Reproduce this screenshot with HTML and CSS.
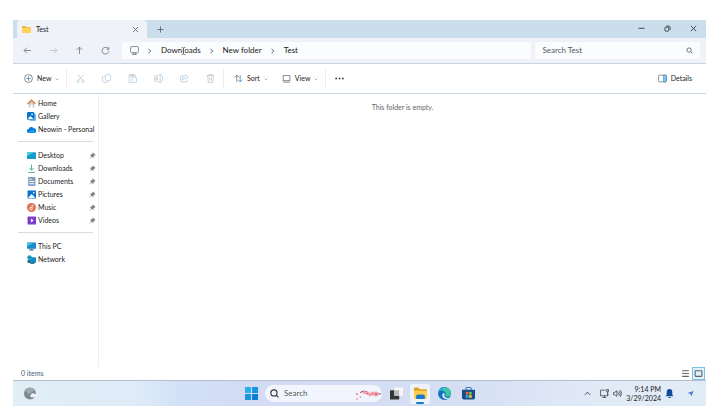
FILE: index.html
```
<!DOCTYPE html>
<html lang="en">
<head>
  <meta charset="UTF-8" />
  <meta name="viewport" content="width=device-width, initial-scale=1.0" />
  <title>Test - File Explorer</title>
  <link rel="stylesheet" href="styles.css">
</head>
<body>

  <main class="explorer">
    <header class="title-bar">
      <div class="tab">
        <svg class="icon" viewBox="0 0 16 16"><path d="M0 3q0-1 1-1h5l2 2h7q1 0 1 1v8H0z" fill="#e8a823" stroke="none"/><path d="M0 5h16v8q0 1-1 1H1q-1 0-1-1z" fill="#ffd35c" stroke="none"/></svg>
        <span class="tab-name">Test</span>
        <button class="tab-close" aria-label="Close tab"><svg class="icon-small" viewBox="0 0 16 16"><path d="M2 2l12 12M14 2L2 14"/></svg></button>
      </div>
      <button class="tab-add" aria-label="New tab"><svg class="icon-small" viewBox="0 0 16 16"><path d="M8 1v14M1 8h14"/></svg></button>
      <div class="window-buttons">
        <button aria-label="Minimize"><svg class="icon-small dark" viewBox="0 0 16 16"><path d="M1 7.500h14"/></svg></button>
        <button aria-label="Restore"><svg class="icon-small dark" viewBox="0 0 16 16"><rect x="2" y="5" width="9" height="9" rx="2"/><path d="M5 2.500h6q3 0 3 3V11"/></svg></button>
        <button aria-label="Close"><svg class="icon-small dark" viewBox="0 0 16 16"><path d="M2 2l12 12M14 2L2 14"/></svg></button>
      </div>
    </header>

    <div class="address-row">
      <nav class="history">
        <button aria-label="Back"><svg class="icon" viewBox="0 0 16 16"><path d="M14 8H2M7 3L2 8l5 5"/></svg></button>
        <button aria-label="Forward" class="faded"><svg class="icon" viewBox="0 0 16 16"><path d="M2 8h12M9 3l5 5-5 5"/></svg></button>
        <button aria-label="Up"><svg class="icon" viewBox="0 0 16 16"><path d="M8 14V2M3 7l5-5 5 5"/></svg></button>
        <button aria-label="Refresh"><svg class="icon" viewBox="0 0 16 16"><path d="M13 5a6 6 0 1 0 1 4M14 2v4h-4"/></svg></button>
      </nav>
      <nav class="crumbs" aria-label="Path">
        <svg class="icon" viewBox="0 0 16 16"><rect x="1" y="1" width="14" height="11" rx="2"/><path d="M6 12v2.500M10 12v2.500M4 15h8"/></svg>
        <svg class="chevron" viewBox="0 0 8 8"><path d="M2 1l3 3-3 3"/></svg>
        <a href="#" class="crumb">Downloads
          <svg class="text-cursor" viewBox="0 0 8 16"><path class="halo" d="M1 2q3 0 3 2v8q0 2-3 2M7 2q-3 0-3 2v8q0 2 3 2"/><path d="M1 2q3 0 3 2v8q0 2-3 2M7 2q-3 0-3 2v8q0 2 3 2"/></svg>
        </a>
        <svg class="chevron" viewBox="0 0 8 8"><path d="M2 1l3 3-3 3"/></svg>
        <a href="#" class="crumb">New folder</a>
        <svg class="chevron" viewBox="0 0 8 8"><path d="M2 1l3 3-3 3"/></svg>
        <a href="#" class="crumb">Test</a>
      </nav>
      <label class="folder-search">
        <input type="text" placeholder="Search Test" aria-label="Search Test">
        <svg class="icon-small" viewBox="0 0 16 16"><circle cx="7" cy="7" r="5"/><path d="M11 11l4 4"/></svg>
      </label>
    </div>

    <div class="toolbar">
      <button class="tool-text tool-new">
        <svg class="icon" viewBox="0 0 16 16"><circle cx="8" cy="8" r="7"/><path class="blue" d="M8 4v8M4 8h8"/></svg>
        New
        <svg class="caret" viewBox="0 0 8 8"><path d="M1 3l3 3 3-3"/></svg>
      </button>
      <div class="tool-group">
        <button aria-label="Cut"><svg class="icon" viewBox="0 0 16 16"><path d="M3 1l8 10M13 1L5 11"/><circle class="blue" cx="3.500" cy="13" r="2.200"/><circle class="blue" cx="12.500" cy="13" r="2.200"/></svg></button>
        <button aria-label="Copy"><svg class="icon" viewBox="0 0 16 16"><path d="M5 4H3q-2 0-2 2v7q0 2 2 2h5q2 0 2-2"/><rect class="blue" x="6" y="1" width="9" height="11" rx="2"/></svg></button>
        <button aria-label="Paste"><svg class="icon" viewBox="0 0 16 16"><path d="M6 15H2V2h11v3M5 1h5v3H5z"/><rect class="blue" x="7" y="6" width="8" height="9" rx="1"/></svg></button>
        <button aria-label="Rename"><svg class="icon" viewBox="0 0 16 16"><path d="M8 3H3Q1 3 1 5v6q0 2 2 2h5M3 11l2-6 2 6M4 9h2"/><path class="blue" d="M9 1h4M9 15h4M11 1v14M13 3q2 0 2 2v6q0 2-2 2"/></svg></button>
        <button aria-label="Share"><svg class="icon" viewBox="0 0 16 16"><path d="M6 3H3Q1 3 1 5v7q0 2 2 2h8q2 0 2-2v-1"/><path class="blue" d="M10 1l5 4-5 4V7q-4 0-6 4 0-7 6-8z"/></svg></button>
        <button aria-label="Delete"><svg class="icon" viewBox="0 0 16 16"><path d="M1 3h14M5 3V1h6v2M3 3l1 12h8l1-12M6.500 6v6M9.500 6v6"/></svg></button>
      </div>
      <div class="tool-group view-tools">
        <button class="tool-text">
          <svg class="icon" viewBox="0 0 16 16"><path d="M5 14V2M1 6l4-4 4 4"/><path class="blue" d="M11 2v12M7.500 10.500L11 14l4-4"/></svg>
          Sort
          <svg class="caret" viewBox="0 0 8 8"><path d="M1 3l3 3 3-3"/></svg>
        </button>
        <button class="tool-text">
          <svg class="icon" viewBox="0 0 16 16"><rect x="2" y="3" width="12" height="9"/><path d="M2 14.500h12"/></svg>
          View
          <svg class="caret" viewBox="0 0 8 8"><path d="M1 3l3 3 3-3"/></svg>
        </button>
      </div>
      <button class="more" aria-label="See more"><svg class="icon solid" viewBox="0 0 16 16"><circle cx="2" cy="8" r="1.700"/><circle cx="8" cy="8" r="1.700"/><circle cx="14" cy="8" r="1.700"/></svg></button>
      <button class="tool-text details">
        <svg class="icon" viewBox="0 0 16 16"><rect x="1" y="2" width="14" height="12" rx="2"/><path d="M10 2h3q2 0 2 2v8q0 2-2 2h-3z" fill="#8cc8f4" stroke="#318fd4"/></svg>
        Details
      </button>
    </div>

    <div class="panes">
      <nav class="sidebar">
        <ul>
          <li><a href="#"><svg class="icon" viewBox="0 0 16 16"><path d="M3 7v8h3v-5h4v5h3V7L8 3z" fill="#c9ced3" stroke="none"/><path d="M1 9l7-7 7 7" stroke="#dc783e" stroke-width="2.500"/></svg>Home</a></li>
          <li><a href="#"><svg class="icon" viewBox="0 0 16 16"><rect x="4" y="3" width="12" height="13" rx="2" fill="#7db9e8" stroke="none"/><rect width="13" height="14" rx="2" fill="#0873ce" stroke="none"/><path d="M1 13l5-6 6 6z" fill="#fff" stroke="none"/><circle cx="9" cy="4" r="1.500" fill="#fff" stroke="none"/></svg>Gallery</a></li>
          <li><a href="#"><svg class="icon" viewBox="0 0 16 16"><path d="M3 14a3.500 3.500 0 0 1 0-7 5 5 0 0 1 9-1 4 4 0 0 1 1 8z" fill="#087bdc" stroke="none"/><path d="M2 13l8-5 5 4q0 2-3 2H4z" fill="#1c9af0" stroke="none"/></svg>Neowin - Personal</a></li>
        </ul>
        <hr>
        <ul>
          <li><a href="#"><svg class="icon" viewBox="0 0 16 16"><rect y="2" width="16" height="12" rx="1" fill="#159ccc" stroke="none"/><path d="M0 9V3q0-1 1-1h11z" fill="#4ed2df" stroke="none"/></svg>Desktop</a><svg class="pin" viewBox="0 0 16 16"><path d="M9 1l6 6-2 1-3 3v3L6 11l-4 4-1-1 4-4-3-4h3l3-3z"/></svg></li>
          <li><a href="#"><svg class="icon" viewBox="0 0 16 16"><path d="M8 1v10M4 7l4 4 4-4M2 15h12" stroke="#2dac83" stroke-width="1.500"/></svg>Downloads</a><svg class="pin" viewBox="0 0 16 16"><path d="M9 1l6 6-2 1-3 3v3L6 11l-4 4-1-1 4-4-3-4h3l3-3z"/></svg></li>
          <li><a href="#"><svg class="icon" viewBox="0 0 16 16"><rect x="2" width="13" height="16" rx="1" fill="#7e9dc0" stroke="none"/><path d="M4 4h4M4 8h9M4 12h9" stroke="#fff" stroke-width="2"/></svg>Documents</a><svg class="pin" viewBox="0 0 16 16"><path d="M9 1l6 6-2 1-3 3v3L6 11l-4 4-1-1 4-4-3-4h3l3-3z"/></svg></li>
          <li><a href="#"><svg class="icon" viewBox="0 0 16 16"><rect x="1" y="1" width="15" height="14" rx="1" fill="#0873ce" stroke="none"/><path d="M2 14l6-7 7 7z" fill="#fff" stroke="none"/><circle cx="12" cy="5" r="1.500" fill="#fff" stroke="none"/></svg>Pictures</a><svg class="pin" viewBox="0 0 16 16"><path d="M9 1l6 6-2 1-3 3v3L6 11l-4 4-1-1 4-4-3-4h3l3-3z"/></svg></li>
          <li><a href="#"><svg class="icon" viewBox="0 0 16 16"><circle cx="8" cy="8" r="8" fill="#df7359" stroke="none"/><circle cx="7" cy="10" r="2.200" stroke="#fff"/><path d="M9 10V4l3 1" stroke="#fff"/></svg>Music</a><svg class="pin" viewBox="0 0 16 16"><path d="M9 1l6 6-2 1-3 3v3L6 11l-4 4-1-1 4-4-3-4h3l3-3z"/></svg></li>
          <li><a href="#"><svg class="icon" viewBox="0 0 16 16"><rect x="1" y="1" width="15" height="14" rx="1" fill="#8242cc" stroke="none"/><path d="M3 2v12M14 2v12" stroke="#5b26a0" stroke-width="2" stroke-dasharray="2 2"/><path d="M7 5l5 3-5 3z" fill="#fff" stroke="none"/></svg>Videos</a><svg class="pin" viewBox="0 0 16 16"><path d="M9 1l6 6-2 1-3 3v3L6 11l-4 4-1-1 4-4-3-4h3l3-3z"/></svg></li>
        </ul>
        <hr>
        <ul>
          <li><a href="#"><svg class="icon" viewBox="0 0 16 16"><rect y="1" width="16" height="11" rx="1" fill="#168dc9" stroke="none"/><path d="M0 8V2q0-1 1-1h11z" fill="#46c4df" stroke="none"/><path d="M4 14h8M8 12v2" stroke="#557083" stroke-width="2"/></svg>This PC</a></li>
          <li><a href="#"><svg class="icon" viewBox="0 0 16 16"><rect x="3" y="4" width="13" height="10" rx="1" fill="#158bc6" stroke="none"/><path d="M6 15h7" stroke="#466b82" stroke-width="2"/><circle cx="4.500" cy="4.500" r="4" fill="#22a5c8" stroke="none"/><path d="M1 4h7" stroke="#1b6389"/><rect x="1" y="9" width="4" height="5" fill="#1b6389" stroke="none"/></svg>Network</a></li>
        </ul>
      </nav>
      <section class="files">
        <p>This folder is empty.</p>
      </section>
    </div>

    <footer class="status-bar">
      <span>0 items</span>
      <div class="view-switch">
        <button aria-label="Details view"><svg class="icon" viewBox="0 0 16 16"><path d="M2 3h12M2 8h12M2 13h12" stroke-width="2"/></svg></button>
        <button aria-label="Large icons" class="selected"><svg class="icon" viewBox="0 0 16 16"><rect x="2" y="3" width="12" height="10" rx="1" stroke-width="2"/></svg></button>
      </div>
    </footer>
  </main>

  <footer class="taskbar">
    <button class="widgets" aria-label="Weather"><svg class="app-icon" viewBox="0 0 24 24"><circle cx="11" cy="12" r="11" fill="#7e8a92"/><path d="M2 6a11 11 0 0 1 18 0L8 14z" fill="#9ea8ad"/><path d="M13 19a3 3 0 0 1 0-5 4 4 0 0 1 7-1 3 3 0 0 1 1 6z" fill="#eef1f4"/></svg></button>

    <div class="apps">
      <button aria-label="Start"><svg class="app-icon" viewBox="0 0 24 24"><path d="M0 0h11v11H0z" fill="#28aee9"/><path d="M13 0h11v11H13zM0 13h11v11H0z" fill="#1895df"/><path d="M13 13h11v11H13z" fill="#0b7dd2"/></svg></button>
      <label class="search-box">
        <svg class="icon" viewBox="0 0 16 16"><circle cx="7" cy="7" r="5.500" stroke-width="2"/><path d="M11 11l4 4" stroke-width="2"/></svg>
        <input type="text" placeholder="Search" aria-label="Search">
        <svg class="blossom" viewBox="0 0 54 24"><path d="M10 9l8-3 8 2M34 9l8 2 10 1" fill="none" stroke="#795359" stroke-width="2"/><g fill="#f4a3b0"><circle cx="4" cy="12" r="2.500"/><circle cx="18" cy="9" r="3"/><circle cx="24" cy="10" r="4"/><circle cx="30" cy="13" r="4"/><circle cx="36" cy="11" r="4"/><circle cx="42" cy="12" r="5"/><circle cx="11" cy="18" r="2"/><circle cx="4" cy="22" r="2"/></g><g fill="#dc5470"><circle cx="25" cy="11" r="1.500"/><circle cx="35" cy="12" r="1.500"/><circle cx="42" cy="12" r="2"/></g></svg>
      </label>
      <button aria-label="Task view"><svg class="app-icon" viewBox="0 0 24 24"><rect y="6" width="17" height="17" rx="1" fill="#353535"/><rect x="8" y="1" width="16" height="15" rx="1" fill="#f7f7f8"/><path d="M8 6h9v10H8z" fill="#b9babb"/></svg></button>
      <button aria-label="File Explorer" class="running"><svg class="app-icon" viewBox="0 0 24 24"><path d="M0 3q0-2 2-2h6l3 3h11q2 0 2 2v10H0z" fill="#e3a21d"/><path d="M0 7h24v13q0 2-2 2H2q-2 0-2-2z" fill="#ffce4e"/><path d="M4 22v-5q0-3 3-3h10q3 0 3 3v5z" fill="#1979ca"/></svg></button>
      <button aria-label="Edge"><svg class="app-icon" viewBox="0 0 24 24"><circle cx="12" cy="12" r="12" fill="#176fc0"/><path d="M1 8a12 12 0 0 1 23 4q0 6-7 6-4 0-3-3 2-6-5-8-5-1-8 1z" fill="#3bc7a4"/><path d="M1 8a12 12 0 0 1 13-8Q4 5 1 12z" fill="#25a2d8"/><path d="M10 11q-5 5 1 10 5 3 10-1-7 1-9-3-1-2 1-4z" fill="#d8ebf5"/></svg></button>
      <button aria-label="Microsoft Store"><svg class="app-icon" viewBox="0 0 24 24"><path d="M7 6V3q0-2 2-2h6q2 0 2 2v3" fill="none" stroke="#2b82b5" stroke-width="2"/><path d="M0 5h24v15q0 3-3 3H3q-3 0-3-3z" fill="#174d88"/><path d="M7 9h5v5H7z" fill="#ef6245"/><path d="M13 9h5v5h-5z" fill="#80bd4c"/><path d="M7 15h5v5H7z" fill="#36a7df"/><path d="M13 15h5v5h-5z" fill="#f5bd42"/></svg></button>
    </div>

    <div class="tray">
      <button aria-label="Hidden icons"><svg class="icon-small dark" viewBox="0 0 16 16"><path d="M2 11l6-6 6 6"/></svg></button>
      <button class="quick" aria-label="Network and volume">
        <svg class="icon dark" viewBox="0 0 16 16"><path d="M10 2H1v10h13V8M4 15h7M8 12v3M12 1h3v4h-3zM13.500 5v6"/></svg>
        <svg class="icon dark" viewBox="0 0 16 16"><path d="M1 6h2l4-3v10l-4-3H1zM9 6q2 2 0 4M11 4q4 4 0 8M13 2q5 6 0 12"/></svg>
      </button>
      <button class="clock"><span>9:14 PM</span><span>3/29/2024</span></button>
      <button aria-label="Notifications"><svg class="icon bell" viewBox="0 0 16 16"><path d="M8 0q5 0 5 6v4l2 3H1l2-3V6q0-6 5-6zM5 14h6q-3 4-6 0z"/></svg></button>
      <button class="pointer" aria-label="Location"><svg class="icon-small" viewBox="0 0 16 16"><path d="M1 7l14-5-5 13-2-6z"/></svg></button>
    </div>
  </footer>

</body>
</html>
```
FILE: styles.css
```
:root {
  --bar: #cadeeb;
  --surface: #eff3f9;
  --field: #fbfcfe;
  --line: #c8d5df;
  --text: #222;
  --blue: #2586cf;
}
* {
  box-sizing: border-box;
}
body {
  margin: 0;
  padding: 20px 8px 2px 13px;
  min-height: 100vh;
  display: flex;
  flex-direction: column;
  background: #fff;
  font-family: Lato, "Open Sans", sans-serif;
  font-size: 7px;
  line-height: 9px;
  color: var(--text);
}
button, input {
  font: inherit;
  color: inherit;
  background: none;
  border: none;
  padding: 0;
  margin: 0;
}
button {
  display: flex;
  align-items: center;
  justify-content: center;
  cursor: pointer;
}
input {
  flex: 1;
  min-width: 0;
  outline: none;
}
input::placeholder {
  color: #55595e;
  opacity: 1;
}
a {
  color: inherit;
  text-decoration: none;
}
svg {
  flex: none;
}
.icon, .icon-small, .chevron, .caret {
  width: 9px;
  height: 9px;
  fill: none;
  stroke: #60666b;
  stroke-width: 1.3;
}
.icon-small {
  width: 7px;
  height: 7px;
  stroke-width: 2;
}
.dark {
  stroke: #30353a;
}
.blue {
  stroke: var(--blue);
}
.chevron, .caret {
  width: 6px;
  height: 6px;
}
.caret {
  width: 4px;
  height: 4px;
  stroke: #999;
}

/* Window frame */
.explorer {
  flex: 1;
  display: flex;
  flex-direction: column;
}
.title-bar {
  display: flex;
  height: 18px;
  background: var(--bar);
}
.tab {
  display: flex;
  align-items: center;
  gap: 5px;
  width: 130px;
  margin-left: 4px;
  padding: 0 8px 0 5px;
  background: var(--surface);
  border-radius: 4px 4px 0 0;
}
.tab-name {
  flex: 1;
}
.tab-add {
  width: 26px;
}
.window-buttons {
  display: flex;
  margin-left: auto;
  padding-bottom: 2px;
}
.window-buttons button {
  width: 26px;
}

/* Navigation and address */
.address-row {
  display: flex;
  align-items: center;
  gap: 4px;
  padding: 4px 6px 4px 1px;
  background: var(--surface);
  border-bottom: 1px solid var(--line);
  font-size: 8px;
}
.history {
  display: flex;
}
.history button {
  width: 26px;
}
.faded {
  opacity: 0.4;
}
.crumbs, .folder-search {
  display: flex;
  align-items: center;
  height: 17px;
  background: var(--field);
  border-radius: 2px;
}
.crumbs {
  flex: 1;
  gap: 8px;
  padding-left: 8px;
}
.crumb {
  position: relative;
}
.text-cursor {
  position: absolute;
  left: 50%;
  top: 0;
  width: 5px;
  height: 10px;
  fill: none;
  stroke: #444;
}
.halo {
  stroke: #fff;
  stroke-width: 3;
}
.folder-search {
  width: 24%;
  padding: 0 7px;
}

/* Command bar */
.toolbar {
  display: flex;
  align-items: center;
  padding: 5px 14px 5px 11px;
  border-bottom: 1px solid var(--line);
}
.tool-text {
  gap: 4px;
}
.tool-new {
  width: 42px;
  justify-content: flex-start;
}
.tool-group {
  display: flex;
  align-items: center;
  height: 19px;
  border-left: 1px solid #eceef0;
  border-right: 1px solid #eceef0;
}
.tool-group > button[aria-label] {
  width: 26px;
}
.tool-group > button[aria-label] .icon {
  opacity: 0.4;
}
.view-tools {
  gap: 14px;
  padding: 0 7px 0 10px;
  border-left: none;
}
.more {
  width: 26px;
}
.solid {
  fill: #444;
  stroke: none;
}
.details {
  margin-left: auto;
}

/* Folder tree and file list */
.panes {
  flex: 1;
  display: flex;
}
.sidebar {
  width: 86px;
  padding: 3px 2px 0 5px;
  border-right: 1px solid #eceef0;
}
.sidebar ul {
  list-style: none;
  margin: 0;
  padding: 0 0 0 9px;
}
.sidebar li {
  display: flex;
  align-items: center;
  justify-content: space-between;
  height: 13px;
}
.sidebar li a {
  display: flex;
  align-items: center;
  gap: 2px;
  white-space: nowrap;
}
.sidebar hr {
  height: 1px;
  margin: 5px 3px 7px 0;
  border: none;
  background: #dadddf;
}
.pin {
  width: 7px;
  height: 7px;
  fill: #79848c;
}
.files {
  flex: 1;
  text-align: center;
  color: #666;
}
.files p {
  margin: 9px 0;
}
.status-bar {
  display: flex;
  align-items: center;
  justify-content: space-between;
  padding-left: 8px;
  border-bottom: 1px solid #b3bfd0;
  color: #42607d;
}
.view-switch {
  display: flex;
  padding-right: 1px;
}
.view-switch button {
  width: 13px;
  height: 13px;
}
.view-switch .selected {
  border: 1px solid #7fc1e6;
  background: #dff1fb;
}

/* Taskbar */
.taskbar {
  display: grid;
  grid-template-columns: 1fr auto 1fr;
  align-items: center;
  height: 25px;
  background: linear-gradient(90deg, #e0eef6 0%, #dfecf8 17%, #d2e1f7 24%, #d4dbf4 34%, #d5dff3 65%, #e1ebf7 85%, #e1ecf7 100%);
}
.widgets {
  width: 34px;
}
.app-icon {
  width: 13px;
  height: 13px;
}
.apps {
  display: flex;
  align-items: center;
  gap: 4px;
}
.apps button {
  width: 20px;
  height: 20px;
}
.search-box {
  display: flex;
  align-items: center;
  gap: 5px;
  width: 117px;
  height: 17px;
  padding: 0 0 0 5px;
  background: #f2f5fd;
  border-radius: 9px;
  font-size: 8px;
}
.search-box .icon {
  stroke: #333;
}
.blossom {
  width: 27px;
  height: 12px;
}
.running {
  position: relative;
  background: #eef2fb;
  border-radius: 2px;
}
.running::after {
  content: '';
  position: absolute;
  left: 6px;
  right: 6px;
  bottom: 0;
  height: 2px;
  background: #147bc2;
  border-radius: 1px;
}
.tray {
  display: flex;
  align-items: center;
  justify-content: flex-end;
  padding-right: 12px;
}
.quick {
  gap: 4px;
  padding: 0 4px 0 9px;
}
.clock {
  flex-direction: column;
  align-items: flex-end;
  margin-right: 4px;
}
.bell {
  fill: #104b9b;
  stroke: none;
}
.pointer {
  margin-left: 13px;
}
.pointer .icon-small {
  fill: #4778d8;
  stroke: none;
}
```
